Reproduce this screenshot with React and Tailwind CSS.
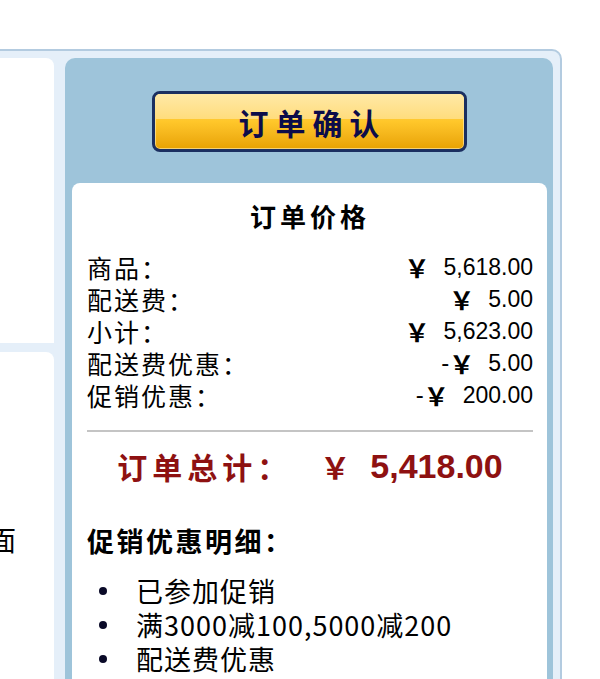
import React from "react";

const cjk = { fontFamily: '"Noto Sans CJK SC", "Noto Sans", sans-serif' };
const num = { fontFamily: '"Liberation Sans", Arial, sans-serif' };

function Row({ label, sign, amount }) {
  return (
    <div className="flex h-[32px] items-center justify-between text-black">
      <span className="text-[25px] leading-[32px] tracking-[2px]" style={cjk}>{label}</span>
      <span className="flex items-center leading-[32px]">
        {sign && <span className="text-[24px]" style={num}>{sign}</span>}
        <span className="text-[25px] font-bold" style={cjk}>￥</span>
        <span className="ml-[14px] text-[23px]" style={num}>{amount}</span>
      </span>
    </div>
  );
}

export default function App() {
  return (
    <div className="h-[679px] w-[600px] overflow-hidden bg-white">
      <div className="h-[49px]" />
      <div className="ml-[-10px] w-[572px] h-[640px] rounded-tr-[10px] border-t-2 border-r-2 border-[#b3cbe0] bg-[#e5eff9] pr-[7px] pt-[7px]">
        <div className="flex h-full gap-[11px]">
          {/* left column */}
          <div className="flex w-[64px] flex-col gap-[9px]">
            <div className="h-[285px] rounded-tr-[8px] bg-white" />
            <div className="flex-1 overflow-hidden rounded-tr-[8px] bg-white">
              <div className="mt-[172px] ml-[-1px] text-[27px] leading-[32px] text-black" style={cjk}>面</div>
            </div>
          </div>
          {/* right blue panel */}
          <div className="flex flex-1 flex-col rounded-t-[10px] bg-[#9ec4da] px-[7px] pr-[6px]">
            <div className="flex justify-center pt-[33px]">
              <div className="relative flex h-[61px] w-[315px] items-center justify-center overflow-hidden rounded-[8px] border-[3px] border-[#1b2f60] bg-gradient-to-b from-[#ffd75a] via-[#ffc72a] to-[#e8a200] shadow-[inset_0_0_0_1px_rgba(255,240,190,0.6)]">
                <div className="absolute inset-x-0 top-0 h-[45%] bg-gradient-to-b from-[#ffe9a6] to-[#ffdc7c]" />
                <span className="relative pl-[6px] text-[30px] font-bold leading-none tracking-[7px] text-[#0c0c4a]" style={cjk}>订单确认</span>
              </div>
            </div>
            <div className="mt-[31px] flex-1 rounded-t-[8px] bg-white pl-[15px] pr-[14px]">
              <div className="pt-[17px] text-center text-[26px] font-bold leading-[32px] tracking-[4px] text-black" style={cjk}>订单价格</div>
              <div className="mt-[19px]">
                <Row label="商品：" amount="5,618.00" />
                <Row label="配送费：" amount="5.00" />
                <Row label="小计：" amount="5,623.00" />
                <Row label="配送费优惠：" sign="-" amount="5.00" />
                <Row label="促销优惠：" sign="-" amount="200.00" />
              </div>
              <div className="mt-[19px] h-[2px] bg-[#c4c4c4]" />
              <div className="mt-[14px] flex h-[40px] items-center justify-center font-bold text-[#8e1111]">
                <span className="text-[30px] tracking-[5px]" style={cjk}>订单总计：</span>
                <span className="ml-[28px] text-[30px]" style={cjk}>￥</span>
                <span className="ml-[20px] text-[34px]" style={num}>5,418.00</span>
              </div>
              <div className="mt-[39px] text-[27px] font-bold leading-[32px] tracking-[2.5px] text-black" style={cjk}>促销优惠明细：</div>
              <ul className="mt-[17px]">
                {["已参加促销", "满3000减100,5000减200", "配送费优惠"].map((t) => (
                  <li key={t} className="flex h-[34px] items-center">
                    <span className="ml-[12px] mr-[29px] h-[8px] w-[8px] shrink-0 rounded-full bg-[#0a0a28]" />
                    <span className="text-[27px] leading-[34px] tracking-[1px] text-black" style={cjk}>{t}</span>
                  </li>
                ))}
              </ul>
            </div>
          </div>
        </div>
      </div>
    </div>
  );
}
